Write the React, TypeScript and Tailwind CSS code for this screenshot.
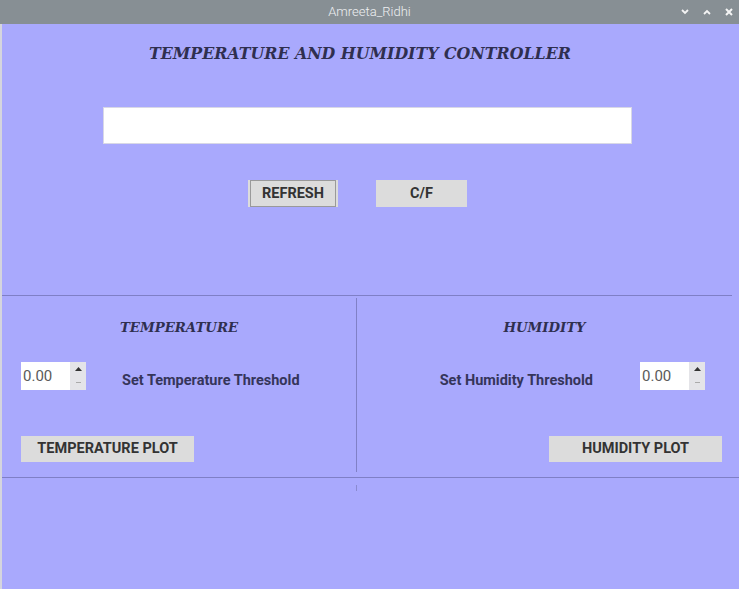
import React from "react";

const label = "font-['Roboto',sans-serif] font-bold text-[14.5px] text-[#35355a]";
const serif = "font-['DejaVu_Serif','Liberation_Serif',serif] font-bold italic text-[#2f2f4f]";

function Spin() {
  return (
    <div className="flex h-[28px] w-[65px] bg-[#d9d9e8]">
      <div className="flex w-[49px] items-center bg-white pl-[2px] font-['Roboto',sans-serif] text-[15px] font-normal text-[#5a5a5a]">0.00</div>
      <div className="flex w-[16px] flex-col bg-[#e4e4e8]">
        <div className="flex flex-1 items-center justify-center">
          <svg width="7" height="4" viewBox="0 0 7 4"><path d="M0 4 L3.5 0 L7 4 Z" fill="#333" /></svg>
        </div>
        <div className="flex flex-1 items-center justify-center">
          <div className="h-px w-[5px] bg-[#aaa]" />
        </div>
      </div>
    </div>
  );
}

function Btn({ children, className = "", focus = false }: { children: React.ReactNode; className?: string; focus?: boolean }) {
  return (
    <div className={`flex items-center justify-center bg-[#dcdcdc] ${className}`}>
      <div className={`flex h-full w-full items-center justify-center ${focus ? "border border-[#9a9a9a] m-[2px]" : ""}`}>
        <span className="font-['Roboto',sans-serif] text-[14.5px] font-bold text-[#333]">{children}</span>
      </div>
    </div>
  );
}

export default function App() {
  return (
    <div className="flex h-[589px] w-[739px] flex-col overflow-hidden bg-[#a9a9fd]">
      <div className="relative flex h-[24px] shrink-0 items-center justify-center bg-[#878f94]">
        <span className="font-['Roboto',sans-serif] text-[13px] font-light text-[#eef0f2]">Amreeta_Ridhi</span>
        <div className="absolute right-[6px] top-0 flex h-full items-center gap-[14px] text-[#f4f4f4]">
          <svg width="8" height="6" viewBox="0 0 8 6"><path d="M1 1 L4 4 L7 1" stroke="currentColor" strokeWidth="1.8" fill="none" /></svg>
          <svg width="8" height="6" viewBox="0 0 8 6"><path d="M1 5 L4 2 L7 5" stroke="currentColor" strokeWidth="1.8" fill="none" /></svg>
          <svg width="8" height="8" viewBox="0 0 8 8"><path d="M1 1 L7 7 M7 1 L1 7" stroke="currentColor" strokeWidth="2" fill="none" /></svg>
        </div>
      </div>
      <div className="flex flex-1 flex-col border-l-2 border-[#d5d5de]">
        <div className="flex h-[271px] flex-col items-start">
          <h1 className={`${serif} ml-[147px] mt-[19px] text-[15.8px] leading-[22px]`}>TEMPERATURE AND HUMIDITY CONTROLLER</h1>
          <div className="ml-[101px] mt-[42px] h-[37px] w-[529px] border border-[#d8d8e6] bg-white" />
          <div className="ml-[246px] mt-[36px] flex gap-[38px]">
            <Btn className="h-[27px] w-[90px]" focus>REFRESH</Btn>
            <Btn className="h-[27px] w-[91px]">C/F</Btn>
          </div>
        </div>
        <div className="h-px w-[730px] bg-[#7f7fc6]" />
        <div className="flex h-[181px]">
          <div className="flex w-[354px] flex-col px-[19px]">
            <div className={`${serif} mt-[22px] text-center text-[13.3px] leading-[20px]`}>TEMPERATURE</div>
            <div className="mt-[22px] flex items-center">
              <Spin />
              <span className={`${label} ml-[36px] mt-[10px]`}>Set Temperature Threshold</span>
            </div>
            <Btn className="mt-[44px] h-[26px] w-[173px]">TEMPERATURE PLOT</Btn>
          </div>
          <div className="mt-[2px] h-[174px] w-px bg-[#8080c6]" />
          <div className="flex flex-1 flex-col pr-[17px]">
            <div className={`${serif} mt-[22px] pl-[10px] text-center text-[13.3px] leading-[20px]`}>HUMIDITY</div>
            <div className="mt-[22px] flex items-center justify-end pr-[17px]">
              <span className={`${label} mr-[47px] mt-[10px]`}>Set Humidity Threshold</span>
              <Spin />
            </div>
            <div className="mt-[44px] flex justify-end">
              <Btn className="h-[26px] w-[173px]">HUMIDITY PLOT</Btn>
            </div>
          </div>
        </div>
        <div className="h-px w-full bg-[#7f7fc6]" />
        <div className="flex justify-center pr-[28px]">
          <div className="mt-[7px] h-[6px] w-px bg-[#8a8ad0]" />
        </div>
      </div>
    </div>
  );
}
